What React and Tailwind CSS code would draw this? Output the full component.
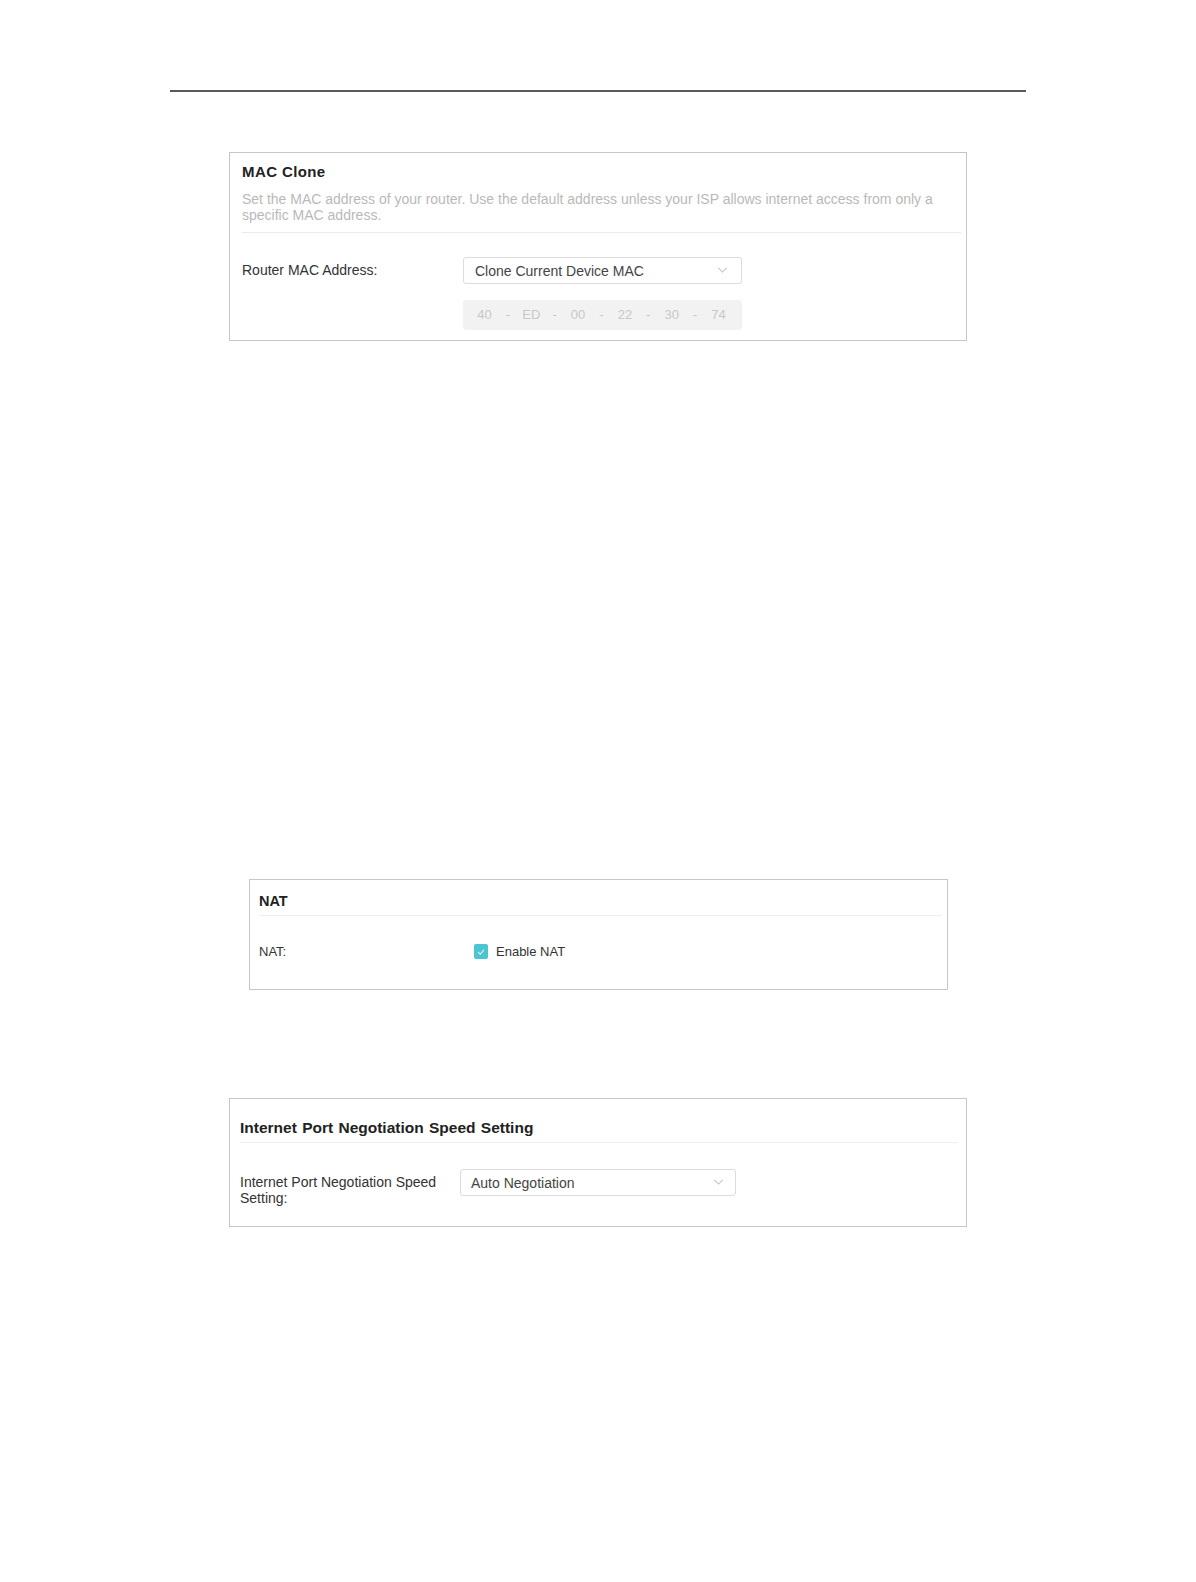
import React from 'react';

const Chevron = ({ className }) => (
  <svg viewBox="0 0 12 7" className={className} fill="none" stroke="#c4c4c4" strokeWidth="1.2">
    <polyline points="1,1 6,6 11,1" />
  </svg>
);

const Select = ({ value, className }) => (
  <div className={`flex items-center justify-between border border-[#dcdcdc] rounded-[3px] bg-white ${className}`}>
    <span className="text-[14px] leading-[20px] text-[#444] pt-px">{value}</span>
    <Chevron className="w-[11px] h-[6px]" />
  </div>
);

const MacField = ({ parts }) => (
  <div className="flex items-center w-[279px] h-[30px] bg-[#f2f2f2] rounded-[3px] pl-[4.5px] mt-[16px]">
    {parts.map((p, i) => (
      <React.Fragment key={i}>
        {i > 0 && <span className="w-[12.8px] text-center text-[13px] text-[#c8c8c8]">-</span>}
        <span className="w-[34px] text-center text-[13px] text-[#c8c8c8]">{p}</span>
      </React.Fragment>
    ))}
  </div>
);

const MacCloneCard = () => (
  <div className="ml-[229px] mt-[60px] w-[738px] border border-[#c6c6c6] pl-[12px] pr-[5px] pt-[9px] pb-[10px]">
    <h3 className="text-[15px] leading-[20px] font-bold text-[#222] tracking-[0.4px]">MAC Clone</h3>
    <p className="mt-[9px] text-[14px] leading-[16px] text-[#b9b9b9]">
      Set the MAC address of your router. Use the default address unless your ISP allows internet access from only a specific MAC address.
    </p>
    <div className="mt-[9px] h-px bg-[#ebebeb]" />
    <div className="mt-[24px] flex items-start">
      <span className="w-[221px] mt-[3px] text-[14px] leading-[20px] text-[#333]">Router MAC Address:</span>
      <div>
        <Select value="Clone Current Device MAC" className="w-[279px] h-[27px] pl-[11px] pr-[13px]" />
        <MacField parts={['40', 'ED', '00', '22', '30', '74']} />
      </div>
    </div>
  </div>
);

const NatCard = () => (
  <div className="ml-[249px] mt-[538px] w-[699px] border border-[#c6c6c6] pl-[9px] pr-[5px] pt-[11px] pb-[27px]">
    <h3 className="text-[14.5px] leading-[20px] font-bold text-[#222]">NAT</h3>
    <div className="mt-[4px] h-px bg-[#eeeeee]" />
    <div className="mt-[26px] flex items-center">
      <span className="w-[215px] text-[13px] leading-[20px] text-[#333]">NAT:</span>
      <label className="flex items-center gap-[8px]">
        <span className="w-[14px] h-[15px] rounded-[2px] bg-[#4cc5d2] flex items-center justify-center">
          <svg viewBox="0 0 10 8" className="w-[8px] h-[6px]" fill="none" stroke="white" strokeWidth="1.4">
            <polyline points="1,4 4,7 9,1" />
          </svg>
        </span>
        <span className="text-[13px] leading-[20px] text-[#333]">Enable NAT</span>
      </label>
    </div>
  </div>
);

const SpeedCard = () => (
  <div className="ml-[229px] mt-[108px] w-[738px] border border-[#c6c6c6] pl-[10px] pr-[9px] pt-[19px] pb-[20px]">
    <h3 className="text-[15.5px] leading-[20px] font-bold text-[#222] [word-spacing:1px]">
      Internet Port Negotiation Speed Setting
    </h3>
    <div className="mt-[4px] h-px bg-[#eeeeee]" />
    <div className="mt-[26px] flex items-start">
      <span className="w-[220px] pr-[16px] mt-[5px] text-[14px] leading-[16px] text-[#333]">
        Internet Port Negotiation Speed Setting:
      </span>
      <Select value="Auto Negotiation" className="w-[276px] h-[27px] pl-[10px] pr-[11px]" />
    </div>
  </div>
);

export default function App() {
  return (
    <div className="min-h-[1582px] w-full bg-white font-['Liberation_Sans',Arial,sans-serif] pt-[90px]">
      <div className="ml-[170px] w-[856px] h-[1.5px] bg-[#5a5a5a]" />
      <MacCloneCard />
      <NatCard />
      <SpeedCard />
    </div>
  );
}
